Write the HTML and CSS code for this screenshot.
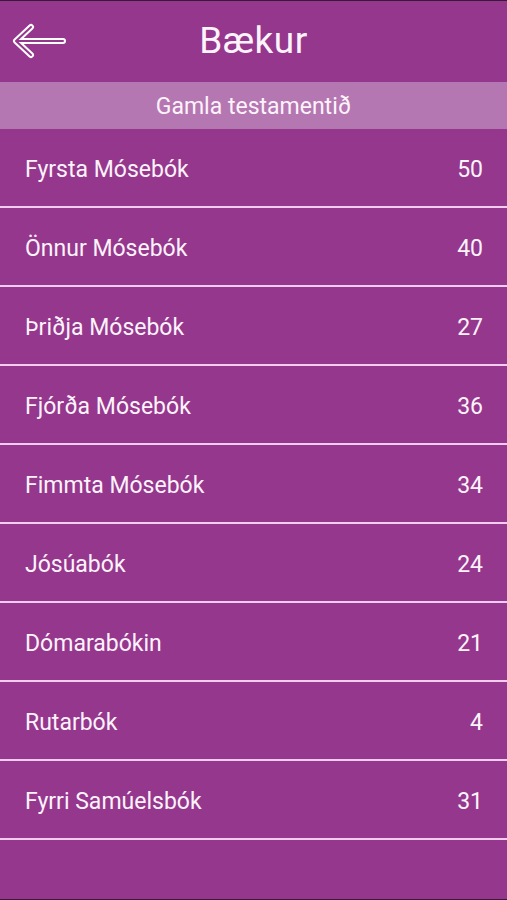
FILE: index.html
```html
<!DOCTYPE html>
<html lang="en">
<head>
  <meta charset="UTF-8">
  <meta name="viewport" content="width=device-width, initial-scale=1.0">
  <title>Bækur</title>
  <link rel="stylesheet" href="styles.css">
</head>
<body>
  <div class="app__container">
    <!-- top bar -->
    <div class="top__bar">
      <button class="back__btn" type="button" aria-label="Til baka">
        <svg width="54" height="36" viewBox="0 0 54 36">
          <path d="M51 18 H5 M19 4 L4 18 L19 32" fill="none" stroke="#fff" stroke-width="6" stroke-linecap="round" stroke-linejoin="round"/>
          <path d="M51 18 H5 M19 4 L4 18 L19 32" fill="none" stroke="#95378d" stroke-width="2" stroke-linecap="round" stroke-linejoin="round"/>
        </svg>
      </button>
      <h1 class="title">Bækur</h1>
    </div>
    <!-- section -->
    <div class="section__head">Gamla testamentið</div>
    <ul class="book__list">
      <li class="book__row"><span>Fyrsta Mósebók</span><span>50</span></li>
      <li class="book__row"><span>Önnur Mósebók</span><span>40</span></li>
      <li class="book__row"><span>Þriðja Mósebók</span><span>27</span></li>
      <li class="book__row"><span>Fjórða Mósebók</span><span>36</span></li>
      <li class="book__row"><span>Fimmta Mósebók</span><span>34</span></li>
      <li class="book__row"><span>Jósúabók</span><span>24</span></li>
      <li class="book__row"><span>Dómarabókin</span><span>21</span></li>
      <li class="book__row"><span>Rutarbók</span><span>4</span></li>
      <li class="book__row"><span>Fyrri Samúelsbók</span><span>31</span></li>
    </ul>
  </div>
</body>
</html>
```

FILE: styles.css
```css
:root {
  --purple: #95378d;
  --purple-light: #b577b1;
  --line: #f2cdef;
  --text: #fdf3fb;
}

* {
  margin: 0;
  padding: 0;
  box-sizing: border-box;
}

body {
  font-family: Roboto, "Noto Sans", sans-serif;
  background: #2a1028;
  color: var(--text);
}

.app__container {
  width: 507px;
  height: 900px;
  margin: 0 auto;
  border-top: 1px solid #3a1838;
  border-bottom: 1px solid #3a1838;
  background: var(--purple);
  overflow: hidden;
}

.top__bar {
  position: relative;
  height: 81px;
  display: flex;
  justify-content: center;
  align-items: center;
}

.back__btn {
  position: absolute;
  left: 12px;
  top: 22px;
  border: none;
  background: none;
  display: flex;
}

.title {
  font-size: 37px;
  font-weight: 400;
  letter-spacing: 0.5px;
  margin-top: -2px;
}

.section__head {
  height: 47px;
  padding-top: 2px;
  display: flex;
  justify-content: center;
  align-items: center;
  background: var(--purple-light);
  font-size: 23px;
}

.book__list {
  list-style: none;
}

.book__row {
  height: 79px;
  padding: 4px 24px 0 25px;
  display: flex;
  justify-content: space-between;
  align-items: center;
  border-bottom: 2px solid var(--line);
  font-size: 23px;
}
```
